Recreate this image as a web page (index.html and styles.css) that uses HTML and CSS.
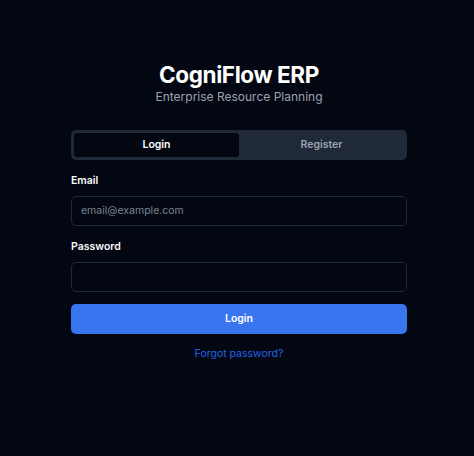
FILE: index.html
```html
<!DOCTYPE html>
<html>
<head>
<meta charset="utf-8">
<link rel="stylesheet" href="styles.css">
</head>
<body>
<main class="page">
  <div class="card">
    <header class="head">
      <h1 class="title">CogniFlow ERP</h1>
      <p class="subtitle">Enterprise Resource Planning</p>
    </header>
    <div class="tabs">
      <button class="tab tab-active">Login</button>
      <button class="tab">Register</button>
    </div>
    <form class="form">
      <div class="field">
        <label class="label">Email</label>
        <input class="input" type="email" placeholder="email@example.com">
      </div>
      <div class="field">
        <label class="label">Password</label>
        <input class="input" type="password">
      </div>
      <button type="button" class="submit">Login</button>
      <a class="forgot" href="#">Forgot password?</a>
    </form>
  </div>
</main>
</body>
</html>
```

FILE: styles.css
```css
* { box-sizing: border-box; }
html, body { margin: 0; padding: 0; }
body {
  background: #030712;
  font-family: Inter, "Noto Sans", sans-serif;
  color: #f9fafb;
  width: 474px;
  height: 456px;
}
.page {
  display: flex;
  justify-content: center;
  padding-top: 61px;
  padding-left: 4px;
}
.card {
  width: 336px;
  display: flex;
  flex-direction: column;
}
.head {
  text-align: center;
  margin-bottom: 23.5px;
}
.title {
  margin: 0;
  font-size: 22.5px;
  line-height: 27px;
  font-weight: 700;
  color: #ffffff;
  letter-spacing: -0.4px;
}
.subtitle {
  margin: 0;
  font-size: 12px;
  line-height: 18px;
  color: #9ca3af;
}
.tabs {
  display: grid;
  grid-template-columns: 1fr 1fr;
  background: #1f2937;
  border-radius: 5px;
  padding: 3px;
  height: 30px;
}
.tab {
  border: 0;
  background: transparent;
  font-family: inherit;
  font-size: 10.5px;
  font-weight: 600;
  color: #9ca3af;
  border-radius: 3px;
  padding: 0;
}
.tab-active {
  background: #030712;
  color: #ffffff;
}
.form {
  display: flex;
  flex-direction: column;
  margin-top: 13.5px;
}
.field {
  display: flex;
  flex-direction: column;
  margin-bottom: 13.5px;
}
.field:last-of-type { margin-bottom: 12px; }
.label {
  font-size: 10.5px;
  font-weight: 600;
  line-height: 15px;
  color: #f9fafb;
  margin-bottom: 7.5px;
}
.input {
  height: 30px;
  background: #030712;
  border: 1px solid #1f2937;
  border-radius: 5px;
  padding: 0 9px;
  font-family: inherit;
  font-size: 10.5px;
  color: #f9fafb;
}
.input::placeholder { color: #7a8392; }
.submit {
  height: 30px;
  border: 0;
  border-radius: 5px;
  background: #3875ef;
  color: #ffffff;
  font-family: inherit;
  font-size: 10.5px;
  font-weight: 600;
}
.forgot {
  align-self: center;
  margin-top: 12.5px;
  font-size: 10.5px;
  line-height: 15px;
  color: #2563eb;
  text-decoration: none;
}
```
